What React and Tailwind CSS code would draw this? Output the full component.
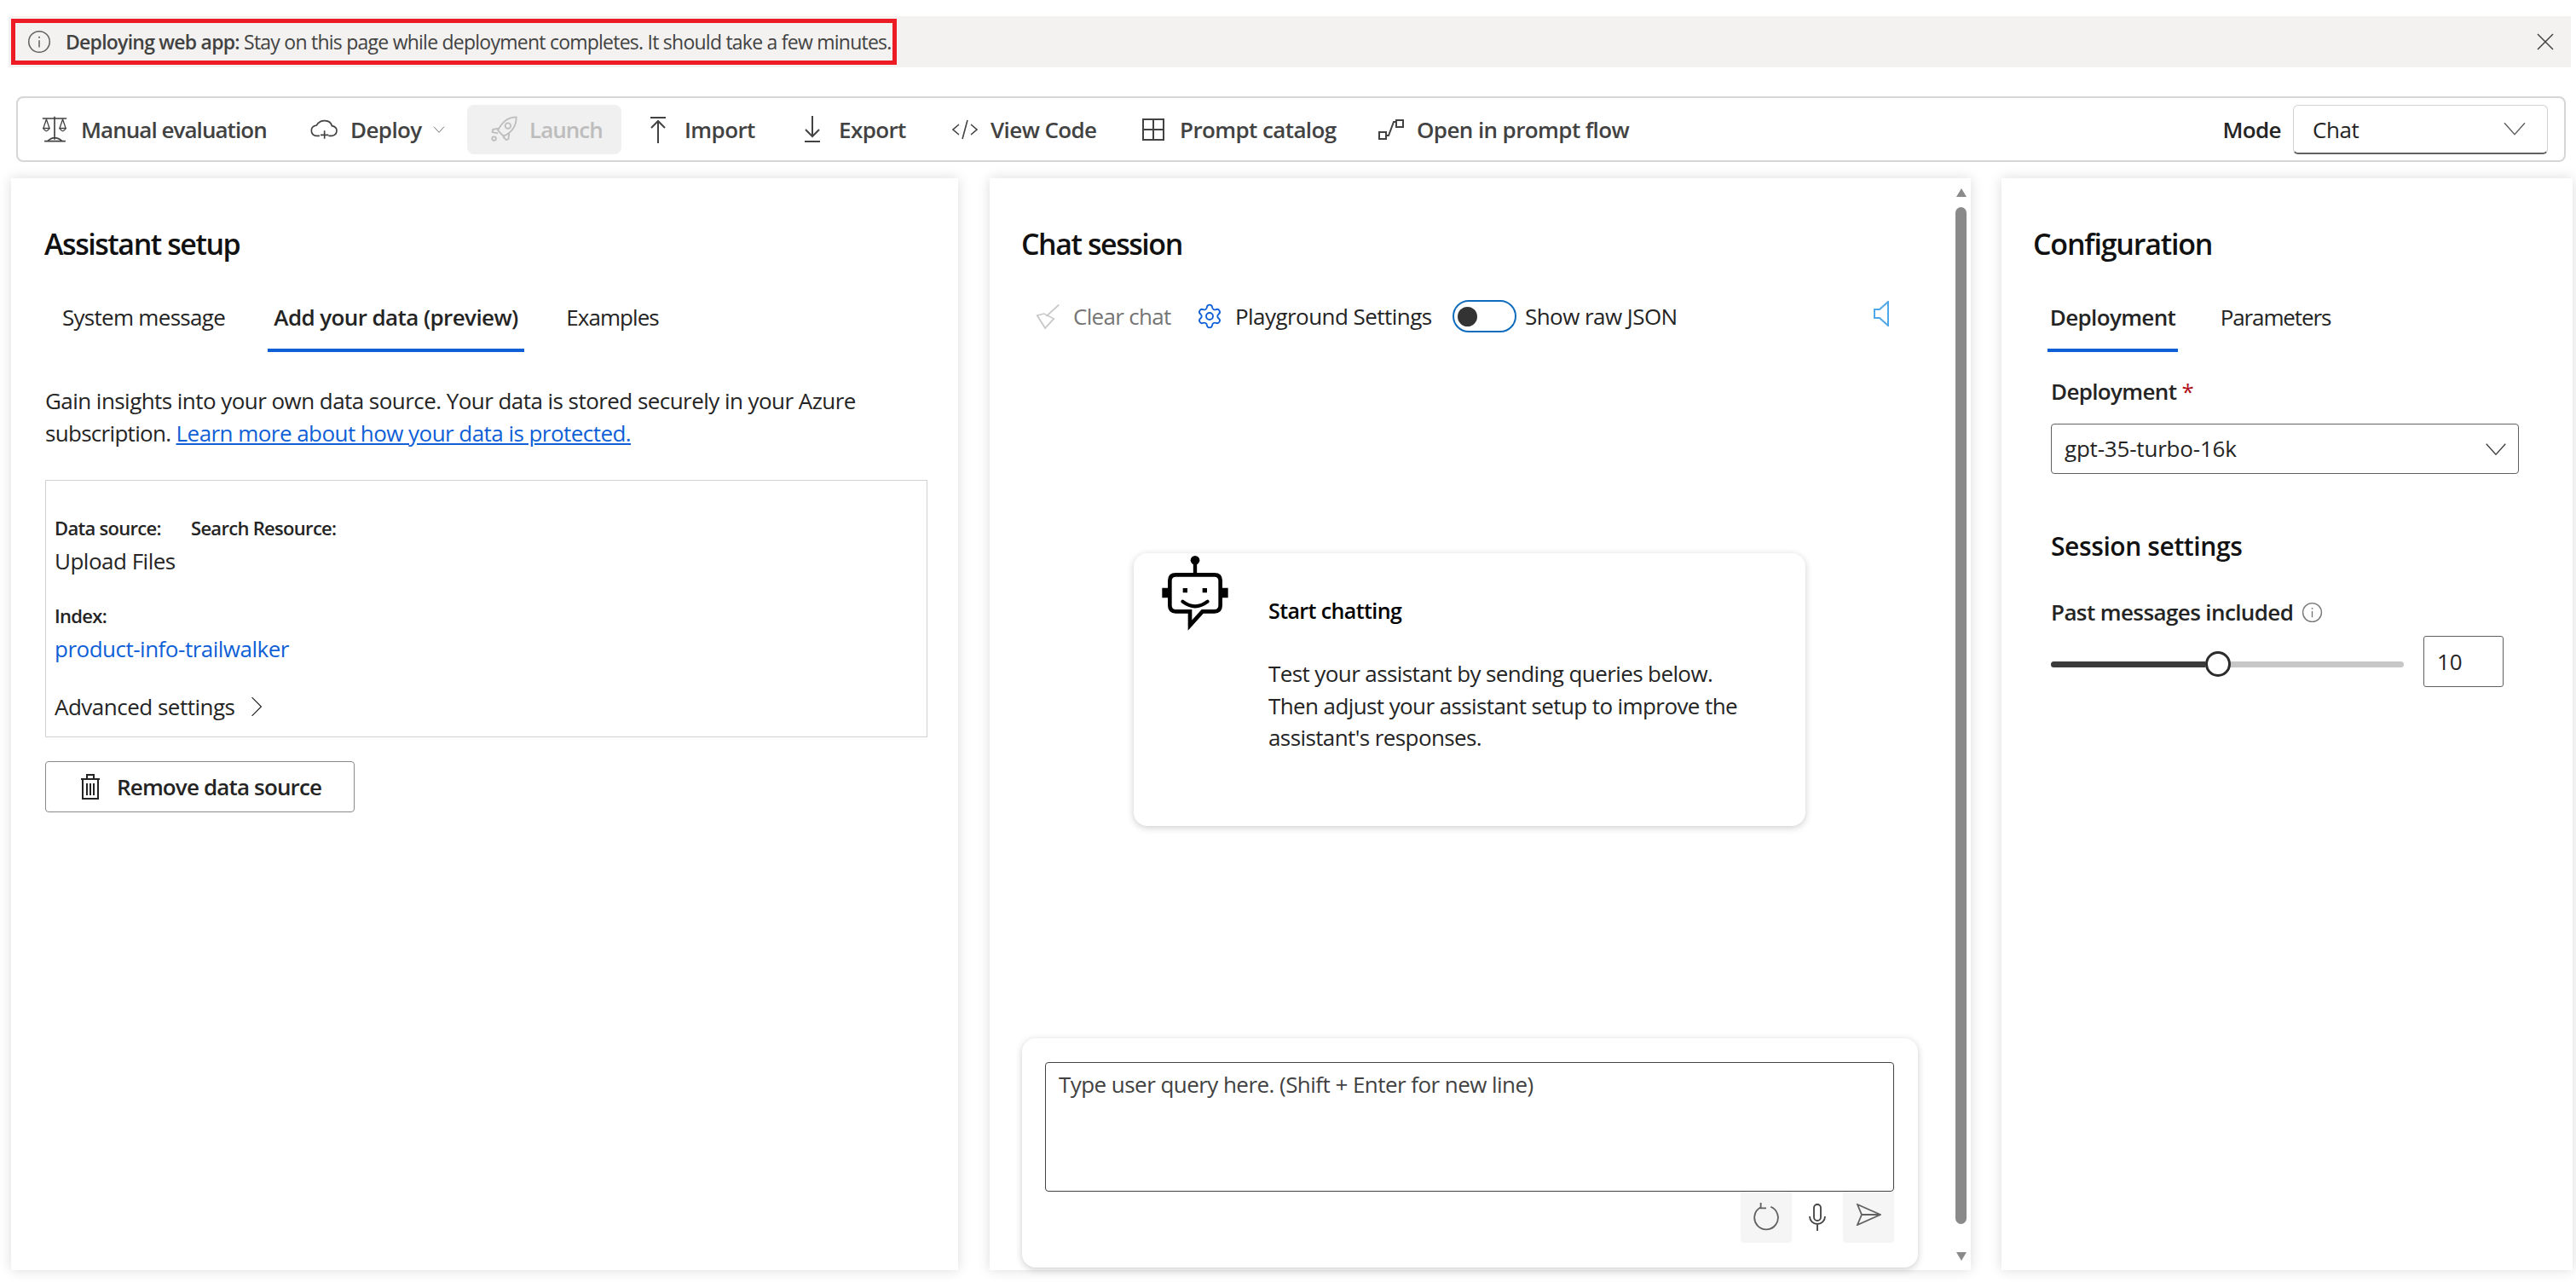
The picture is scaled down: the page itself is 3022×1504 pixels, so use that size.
import { Settings } from 'lucide-react'

function Chevron({ className, dir = 'down' }) {
  return (
    <svg viewBox="0 0 24 24" fill="none" stroke="currentColor" strokeWidth="1.1" className={className}>
      {dir === 'down' ? <path d="M3 7l9 10 9-10" /> : <path d="M7 2l10 10L7 22" />}
    </svg>
  )
}

function InfoIcon({ className }) {
  return (
    <svg viewBox="0 0 24 24" fill="none" stroke="currentColor" strokeWidth="1.3" className={className}>
      <circle cx="12" cy="12" r="10.5" />
      <path d="M12 10.5v7" />
      <circle cx="12" cy="7.5" r="0.9" fill="currentColor" stroke="none" />
    </svg>
  )
}

function ScaleIcon() {
  return (
    <svg viewBox="86 76 90 94" fill="none" stroke="#424242" strokeWidth="5" className="w-[30px] h-[31px]">
      <path d="M88 85h86M131 78v82M95 166h75M106 166q25-24 52 0" />
      <path d="M102 88l-11 32h22zM160 88l-11 32h22z" strokeWidth="4" />
      <path d="M91 120q11 20 22 0M149 120q11 20 22 0" strokeWidth="4" />
    </svg>
  )
}

function CloudIcon() {
  return (
    <svg viewBox="1033 92 96 72" fill="none" stroke="#424242" strokeWidth="5" className="w-[32px] h-[24px]">
      <path d="M1066 150h-12q-17-2-17-19 0-15 18-18 10-17 30-16 20 1 24 18 17 3 17 17 0 16-17 18h-12" />
      <path d="M1083 132v28M1069 147h28" />
    </svg>
  )
}

function RocketIcon() {
  return (
    <svg viewBox="162 76 98 94" fill="none" stroke="#bdbdbd" strokeWidth="5.5" className="w-[32px] h-[31px]">
      <path d="M256 80c-32 0-52 19-66 48l20 20c30-13 46-36 46-68z" />
      <circle cx="226" cy="111" r="10" />
      <path d="M194 120l-22 4-2 10 20 4M212 144l-2 8 10 10 8-4 2-20" />
      <circle cx="176" cy="157" r="7" />
    </svg>
  )
}

function Toolbtn({ children, className }) {
  return <div className={`flex items-center h-[58px] font-semibold text-[#424242] text-[26px] tracking-[-0.6px] whitespace-nowrap ${className}`}>{children}</div>
}

function RobotIcon() {
  return (
    <svg viewBox="130 67 232 270" className="w-[78px] h-[90px]" fill="none" stroke="#000">
      <circle cx="246" cy="83" r="16" fill="#000" stroke="none" />
      <path d="M246 95v36" strokeWidth="13" />
      <path d="M178 134H314Q335 134 335 155V242Q335 263 314 263H272L228 312V263H178Q157 263 157 242V155Q157 134 178 134Z" strokeWidth="14" />
      <path d="M130 180h20v35h-20zM342 180h20v35h-20zM203 181h16v16h-16zM272 181h16v16h-16z" fill="#000" stroke="none" />
      <path d="M202 228Q246 262 290 228" strokeWidth="12" strokeLinecap="round" />
    </svg>
  )
}

export default function App() {
  return (
    <div className="w-[3022px] h-[1504px] overflow-hidden bg-white font-['Open_Sans',sans-serif] text-[#242424] pt-[19px]">
      {/* banner */}
      <div className="ml-[10px] mr-[6px] h-[60px] bg-[#f3f2f1] flex items-center justify-between pr-[20px]">
        <div className="ml-[3px] w-[1039px] h-[54px] border-[5px] border-[#ed1c24] flex items-center pl-[14px] text-[23px] tracking-[-0.76px] text-[#424242] whitespace-nowrap">
          <InfoIcon className="w-[28px] h-[28px] text-[#616161] mr-[17px] shrink-0" />
          <span><span className="font-semibold">Deploying web app:</span> Stay on this page while deployment completes. It should take a few minutes.</span>
        </div>
        <svg viewBox="0 0 20 20" fill="none" stroke="#424242" strokeWidth="1.5" className="w-[20px] h-[20px]"><path d="M1 1l18 18M19 1L1 19" /></svg>
      </div>

      {/* toolbar */}
      <div className="mt-[34px] ml-[19px] mr-[12px] h-[77px] border-2 border-[#d6d6d6] rounded-[8px] flex items-center">
        <Toolbtn className="ml-[28px]"><ScaleIcon /><span className="ml-[16px] w-[219px] pt-[2px] tracking-[-0.95px]">Manual evaluation</span></Toolbtn>
        <Toolbtn className="ml-[50px]"><CloudIcon /><span className="ml-[15px] w-[84px] pt-[2px]">Deploy</span><Chevron className="ml-[12px] w-[16px] h-[16px]" /></Toolbtn>
        <Toolbtn className="ml-[25px] w-[181px] bg-[#f0f0f0] rounded-[8px] pl-[27px] text-[#bdbdbd]"><RocketIcon /><span className="ml-[14px] pt-[2px] tracking-[-1px]">Launch</span></Toolbtn>
        <Toolbtn className="ml-[33px]">
          <svg viewBox="0 0 20 32" fill="none" stroke="#424242" strokeWidth="2" className="w-[20px] h-[32px]"><path d="M1 2h18M10 32V6M2 14l8-8 8 8" /></svg>
          <span className="ml-[21px] w-[81px] pt-[2px]">Import</span>
        </Toolbtn>
        <Toolbtn className="ml-[59px]">
          <svg viewBox="0 0 20 32" fill="none" stroke="#424242" strokeWidth="2" className="w-[20px] h-[32px]"><path d="M10 0v24M2 16l8 8 8-8M1 30h18" /></svg>
          <span className="ml-[21px] w-[77px] pt-[2px]">Export</span>
        </Toolbtn>
        <Toolbtn className="ml-[56px]">
          <svg viewBox="0 0 30 24" fill="none" stroke="#424242" strokeWidth="1.6" className="w-[30px] h-[24px]"><path d="M8 6l-7 6 7 6M22 6l7 6-7 6M18 1l-6 22" /></svg>
          <span className="ml-[15px] w-[125px] pt-[2px]">View Code</span>
        </Toolbtn>
        <Toolbtn className="ml-[53px]">
          <svg viewBox="0 0 26 26" fill="none" stroke="#424242" strokeWidth="2" className="w-[26px] h-[26px]"><path d="M1 1h24v24H1zM13 1v24M1 13h24" /></svg>
          <span className="ml-[18px] w-[183px] pt-[2px]">Prompt catalog</span>
        </Toolbtn>
        <Toolbtn className="ml-[50px]">
          <svg viewBox="0 0 30 26" fill="none" stroke="#424242" strokeWidth="2" className="w-[30px] h-[26px]"><path d="M1 16h8v8H1zM21 2h8v8h-8zM9 20h3l6-16h3" /></svg>
          <span className="ml-[15px] pt-[2px]">Open in prompt flow</span>
        </Toolbtn>
        <span className="ml-auto pt-[2px] font-semibold text-[26px] tracking-[-0.6px] text-[#242424]">Mode</span>
        <div className="ml-[14px] mr-[19px] w-[299px] h-[58px] border border-[#d1d1d1] border-b-2 border-b-[#616161] rounded-[6px] flex items-center justify-between pl-[22px] pr-[22px] text-[26px] tracking-[-0.4px]">
          <span className="pt-[2px]">Chat</span>
          <Chevron className="w-[32px] h-[32px] text-[#616161]" />
        </div>
      </div>

      {/* panels */}
      <div className="mt-[19px] ml-[13px] flex h-[1281px]">
        {/* assistant setup */}
        <div className="w-[1111px] h-full bg-white shadow-[0_0_14px_rgba(0,0,0,0.14)] pl-[40px] pt-[53px]">
          <h2 className="h-[48px] leading-[48px] text-[34px] font-semibold tracking-[-1.45px] ml-[-1px] text-[#111]">Assistant setup</h2>
          <div className="mt-[26px] ml-[14px] flex text-[26px] tracking-[-0.5px]">
            <div className="w-[203px] h-[77px] pb-[4px] flex items-center justify-center whitespace-nowrap tracking-[-0.7px]">System message</div>
            <div className="ml-[44px] w-[301px] h-[77px] border-b-4 border-[#0f5fd7] font-semibold flex items-center justify-center whitespace-nowrap tracking-[-0.6px]">Add your data (preview)</div>
            <div className="ml-[44px] w-[119px] h-[77px] pb-[4px] flex items-center justify-center tracking-[-0.95px]">Examples</div>
          </div>
          <p className="mt-[39px] text-[26px] leading-[37.5px] tracking-[-0.55px] w-[1040px]">
            Gain insights into your own data source. Your data is stored securely in your Azure <span className="tracking-[-0.7px]">subscription.</span>{' '}
            <span className="text-[#0f5fd7] underline">Learn more about how your data is protected.</span>
          </p>
          <div className="mt-[36px] w-[1035px] h-[302px] border border-[#d1d1d1] pl-[10px] pt-[37px] text-[26px] tracking-[-0.5px]">
            <div className="flex h-[36px] items-center text-[22px] font-semibold tracking-[-0.7px]">
              <span className="w-[160px]">Data source:</span>
              <span>Search Resource:</span>
            </div>
            <div className="mt-[3px] leading-[36px]">Upload Files</div>
            <div className="mt-[28px] leading-[36px] text-[22px] font-semibold tracking-[-0.7px]">Index:</div>
            <div className="mt-[3px] leading-[36px] text-[#0f5fd7]">product-info-trailwalker</div>
            <div className="mt-[32px] flex items-center h-[36px]">Advanced settings<Chevron dir="right" className="ml-[13px] w-[26px] h-[30px]" /></div>
          </div>
          <div className="mt-[28px] w-[363px] h-[60px] border border-[#8a8a8a] rounded-[4px] flex items-center pl-[40px] text-[26px] font-semibold tracking-[-0.85px]">
            <svg viewBox="0 0 24 30" fill="none" stroke="#242424" strokeWidth="2" className="w-[24px] h-[30px] shrink-0"><path d="M3 6h18v23H3zM1 6h22M8 6V1h8v5M8 11v14M12 11v14M16 11v14" /></svg>
            <span className="ml-[19px] whitespace-nowrap">Remove data source</span>
          </div>
        </div>

        {/* chat session */}
        <div className="ml-[37px] w-[1151px] h-full bg-white shadow-[0_0_14px_rgba(0,0,0,0.14)] flex">
          <div className="w-[1133px] h-full flex flex-col pl-[38px] pt-[53px] pb-[3px]">
            <h2 className="h-[48px] leading-[48px] text-[34px] font-semibold tracking-[-1.45px] ml-[-1px] text-[#111]">Chat session</h2>
            <div className="mt-[42px] h-[38px] flex items-center text-[26px] tracking-[-0.55px] whitespace-nowrap">
              <svg viewBox="80 302 46 62" preserveAspectRatio="none" fill="none" stroke="#c8c8c8" strokeWidth="3" className="ml-[15px] w-[31px] h-[31px] shrink-0"><path d="M122 305l-22 27M96 326l17 12-15 22-14-30z" /></svg>
              <span className="ml-[14px] w-[115px] text-[#757575] tracking-[-0.7px]">Clear chat</span>
              <Settings strokeWidth={1.4} className="ml-[29px] w-[32px] h-[32px] text-[#0f5fd7] shrink-0" />
              <span className="ml-[14px] w-[233px]">Playground Settings</span>
              <div className="ml-[22px] w-[75px] h-[38px] rounded-full border-2 border-[#0f6cbd] flex items-center pl-[4px] shrink-0">
                <div className="w-[23px] h-[23px] rounded-full bg-[#333]" />
              </div>
              <span className="ml-[10px] w-[180px]">Show raw JSON</span>
              <svg viewBox="0 0 20 30" fill="none" stroke="#4fa8e8" strokeWidth="2" className="ml-[228px] w-[20px] h-[30px] mt-[-6px] shrink-0"><path d="M18 1L8 10H2v10h6l10 9z" /></svg>
            </div>
            <div className="mt-[259px] ml-[131px] w-[788px] h-[320px] rounded-[16px] bg-white shadow-[0_2px_8px_rgba(0,0,0,0.2)] flex pl-[33px] pt-[3px]">
              <RobotIcon />
              <div className="ml-[47px] text-[26px] tracking-[-0.6px]">
                <div className="mt-[46px] h-[36px] leading-[36px] font-semibold text-[25px] text-[#000]">Start chatting</div>
                <div className="mt-[38px] w-[570px] leading-[37.5px]">Test your assistant by sending queries below. Then adjust your assistant setup to improve the assistant's responses.</div>
              </div>
            </div>
            <div className="mt-auto w-[1051px] h-[269px] rounded-[16px] bg-white shadow-[0_2px_8px_rgba(0,0,0,0.2)] pl-[27px] pt-[28px]">
              <div className="w-[996px] h-[152px] border-[1.5px] border-[#424242] rounded-[4px] pl-[15px] pt-[7px] text-[26px] leading-[36px] tracking-[-0.55px] text-[#424242]">Type user query here. (Shift + Enter for new line)</div>
              <div className="flex justify-end w-[996px] h-[60px]">
                <div className="w-[60px] h-[60px] bg-[#f5f5f5] rounded-b-[4px] flex items-center justify-center">
                  <svg viewBox="0 0 30 32" fill="none" stroke="#616161" strokeWidth="1.7" className="w-[32px] h-[34px]"><path d="M9 5a13 13 0 1 0 11-.5M9 0v6h6" /></svg>
                </div>
                <div className="w-[60px] h-[60px] flex items-center justify-center">
                  <svg viewBox="0 0 24 32" fill="none" stroke="#424242" strokeWidth="1.8" className="w-[24px] h-[32px]"><rect x="8" y="1" width="8" height="19" rx="4" /><path d="M3 15a9 9 0 0 0 18 0M12 24v8" /></svg>
                </div>
                <div className="w-[60px] h-[60px] bg-[#f5f5f5] rounded-b-[4px] flex items-center justify-center">
                  <svg viewBox="0 0 30 26" fill="none" stroke="#616161" strokeWidth="1.8" className="w-[30px] h-[26px] mt-[-6px]"><path d="M2 1l27 12L2 25l5-12zM7 13h22" /></svg>
                </div>
              </div>
            </div>
          </div>
          <div className="w-[13px] pt-[12px] flex flex-col items-center">
            <svg viewBox="0 0 12 10" className="w-[12px] h-[10px]"><path d="M6 0l6 10H0z" fill="#8a8a8a" /></svg>
            <div className="mt-[12px] w-[13px] h-[1193px] rounded-full bg-[#8a8a8a]" />
            <svg viewBox="0 0 12 10" className="mt-[33px] w-[12px] h-[10px]"><path d="M6 10l6-10H0z" fill="#8a8a8a" /></svg>
          </div>
        </div>

        {/* configuration */}
        <div className="ml-[36px] w-[670px] h-full bg-white shadow-[0_0_14px_rgba(0,0,0,0.14)] pl-[58px] pt-[53px]">
          <h2 className="ml-[-21px] h-[48px] leading-[48px] text-[34px] font-semibold tracking-[-1.2px] text-[#111]">Configuration</h2>
          <div className="mt-[26px] ml-[-4px] flex text-[26px] tracking-[-0.5px]">
            <div className="w-[153px] h-[77px] border-b-4 border-[#0f5fd7] font-semibold flex items-center justify-center tracking-[-0.65px]">Deployment</div>
            <div className="ml-[47px] w-[135px] h-[77px] pb-[4px] flex items-center justify-center tracking-[-1.1px]">Parameters</div>
          </div>
          <div className="mt-[28px] h-[36px] leading-[36px] text-[26px] font-semibold tracking-[-0.65px]">Deployment <span className="text-[#b10e1c] font-normal">*</span></div>
          <div className="mt-[20px] w-[549px] h-[59px] border-[1.5px] border-[#616161] rounded-[4px] flex items-center justify-between pl-[15px] pr-[11px] text-[26px] tracking-[-0.2px]">
            gpt-35-turbo-16k
            <Chevron className="w-[30px] h-[30px] text-[#424242]" />
          </div>
          <div className="mt-[64px] h-[42px] leading-[42px] text-[30px] font-semibold tracking-[-0.4px] text-[#111]">Session settings</div>
          <div className="mt-[38px] h-[36px] flex items-center text-[26px] font-semibold tracking-[-0.6px]">
            Past messages included
            <InfoIcon className="ml-[10px] w-[25px] h-[25px] text-[#757575]" />
          </div>
          <div className="mt-[10px] flex items-center h-[60px]">
            <div className="mt-[6px] w-[414px] h-[7px] rounded-full bg-[#c7c7c7] flex items-center">
              <div className="w-[181px] h-[7px] rounded-l-full bg-[#3b3b3b]" />
              <div className="w-[30px] h-[30px] rounded-full bg-white border-[3px] border-[#2b2b2b] shrink-0" />
            </div>
            <div className="ml-[23px] w-[94px] h-[60px] border-[1.5px] border-[#616161] rounded-[3px] flex items-center pl-[15px] text-[26px]">10</div>
          </div>
        </div>
      </div>
    </div>
  )
}
